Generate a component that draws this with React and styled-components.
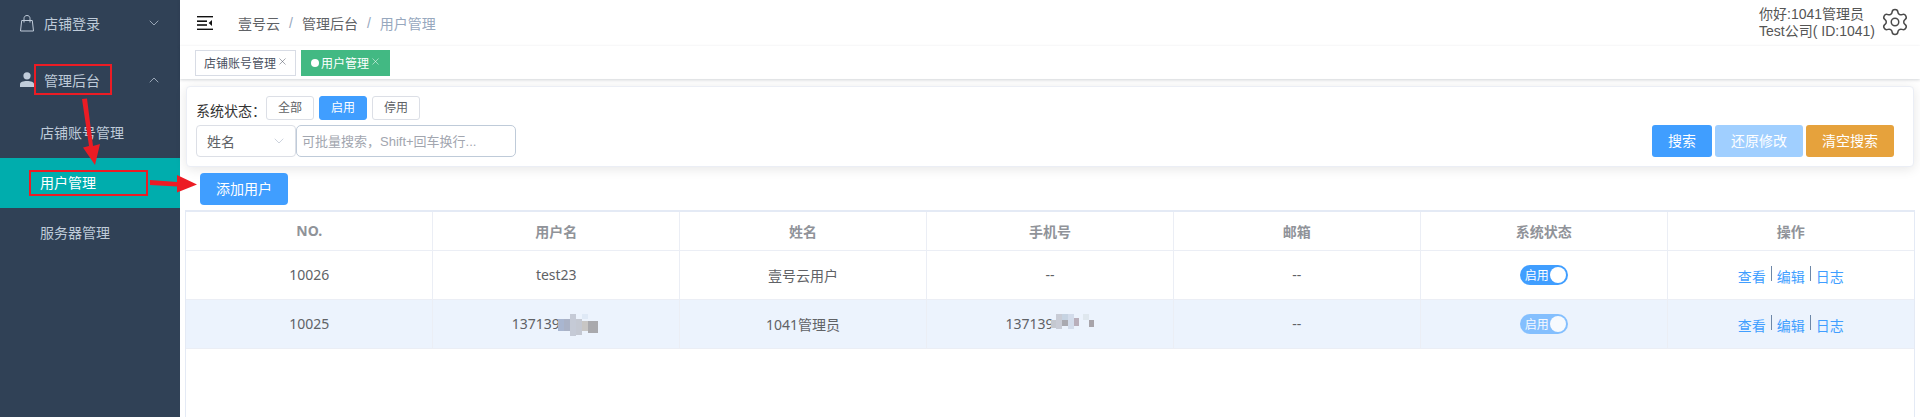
import React from 'react'
import styled, { createGlobalStyle } from 'styled-components'
import { ChevronDown, ChevronUp, Settings, X } from 'lucide-react'

const columns = ['NO.', '用户名', '姓名', '手机号', '邮箱', '系统状态', '操作']

const users = [
  { id: '10026', account: 'test23', name: '壹号云用户', phone: '--', mail: '--' },
  { id: '10025', account: '137139', name: '1041管理员', phone: '137139', mail: '--', masked: true, dimmed: true },
]

export default function App() {
  return (
    <Shell>
      <GlobalStyle />
      <Sidebar>
        <MenuTitle>
          <BagIcon />
          <MenuLabel>店铺登录</MenuLabel>
          <ChevronDown size={16} strokeWidth={1.1} />
        </MenuTitle>
        <MenuTitle $second>
          <UserIcon />
          <MenuLabel>管理后台</MenuLabel>
          <ChevronUp size={16} strokeWidth={1.1} />
        </MenuTitle>
        <SubItem>店铺账号管理</SubItem>
        <SubItem $active>用户管理</SubItem>
        <SubItem>服务器管理</SubItem>
      </Sidebar>

      <Main>
        <Header>
          <FoldIcon />
          <Crumbs>
            <Crumb>壹号云</Crumb><Slash>/</Slash>
            <Crumb>管理后台</Crumb><Slash>/</Slash>
            <Crumb $current>用户管理</Crumb>
          </Crumbs>
          <Greeting>
            <div>你好:1041管理员</div>
            <div>Test公司( ID:1041)</div>
          </Greeting>
          <GearWrap><Settings size={30} strokeWidth={1.2} color="#4a4a4a" /></GearWrap>
        </Header>

        <TagBar>
          <Tag>店铺账号管理<X size={11} strokeWidth={1.1} /></Tag>
          <Tag $active><TagDot />用户管理<X size={11} strokeWidth={1.1} /></Tag>
        </TagBar>

        <FilterCard>
          <StatusRow>
            <StatusLabel>系统状态：</StatusLabel>
            <StatusButton>全部</StatusButton>
            <StatusButton $active>启用</StatusButton>
            <StatusButton>停用</StatusButton>
          </StatusRow>
          <SearchRow>
            <Select>姓名<ChevronDown size={16} strokeWidth={1} color="#b4bccc" /></Select>
            <SearchInput placeholder="可批量搜索，Shift+回车换行..." />
            <Actions>
              <ActionButton $width={60} $bg="#409eff">搜索</ActionButton>
              <ActionButton $width={88} $bg="#a0cfff">还原修改</ActionButton>
              <ActionButton $width={88} $bg="#e6a23c">清空搜索</ActionButton>
            </Actions>
          </SearchRow>
        </FilterCard>

        <AddButton>添加用户</AddButton>

        <TableWrap>
          <Table>
            <thead>
              <tr>{columns.map(c => <HeadCell key={c}>{c}</HeadCell>)}</tr>
            </thead>
            <tbody>
              {users.map(u => (
                <Row key={u.id} $hover={u.dimmed}>
                  <Cell>{u.id}</Cell>
                  <Cell>{u.account}{u.masked && <Mosaic />}</Cell>
                  <Cell>{u.name}</Cell>
                  <Cell>{u.phone}{u.masked && <Mosaic alt />}</Cell>
                  <Cell>{u.mail}</Cell>
                  <Cell>
                    <Switch $dimmed={u.dimmed}>启用<Knob /></Switch>
                  </Cell>
                  <Cell>
                    <OpLinks>
                      <OpLink>查看</OpLink><OpSep />
                      <OpLink>编辑</OpLink><OpSep />
                      <OpLink>日志</OpLink>
                    </OpLinks>
                  </Cell>
                </Row>
              ))}
            </tbody>
          </Table>
        </TableWrap>
      </Main>

      <RedBox $x={34} $y={64} $w={78} $h={31} />
      <RedBox $x={29} $y={170} $w={119} $h={26} />
      <Arrows />
    </Shell>
  )
}

function BagIcon() {
  return (
    <svg width="16" height="17" viewBox="0 0 16 17" fill="none" stroke="#bfcbd9" strokeWidth="1">
      <path d="M1.7 5.5h10.6l1.2 10.5H.5z" />
      <path d="M4 7.5V3.5C4 1.7 5.2.5 7 .5s3 1.2 3 3v4" />
    </svg>
  )
}

function UserIcon() {
  return (
    <svg width="16" height="16" viewBox="0 0 16 16" fill="#c0ccda">
      <circle cx="7" cy="3.8" r="3.6" />
      <path d="M0 15v-2.6C0 10 3 9 7 9s7 1 7 3.4V15z" />
    </svg>
  )
}

function FoldIcon() {
  return (
    <svg width="16" height="14" viewBox="0 0 16 14" fill="#111">
      <rect x="0" y="0" width="16" height="1.4" />
      <rect x="0" y="4.4" width="10" height="1.6" />
      <rect x="0" y="8.2" width="10" height="1.6" />
      <rect x="0" y="12.6" width="16" height="1.4" />
      <path d="M15 4v6l-3.4-3z" />
    </svg>
  )
}

function Mosaic({ alt }) {
  const cells = alt
    ? [[0, 6, 5, 8, '#c4c8d0'], [5, 0, 6, 15, '#c9ccd6'], [11, 0, 6, 12, '#c6d3e2'], [11, 6, 6, 6, '#a9a9b0'], [17, 0, 6, 15, '#d3dceb'], [23, 4, 5, 8, '#b9afbb'], [32, 0, 6, 6, '#dfe7ee'], [38, 6, 5, 7, '#a8a4aa']]
    : [[0, 5, 6, 12, '#a9b6d0'], [6, 5, 6, 12, '#aab2c6'], [12, 0, 6, 22, '#c5cad6'], [18, 5, 6, 16, '#c4c8d2'], [24, 0, 6, 5, '#dfe9f6'], [24, 7, 6, 10, '#c8c6c4'], [30, 7, 10, 12, '#a9a9ad']]
  return (
    <MosaicSvg width="44" height="22" viewBox="0 0 44 22">
      {cells.map(([x, y, w, h, fill], i) => (
        <rect key={i} x={x} y={y} width={w} height={h} fill={fill} />
      ))}
    </MosaicSvg>
  )
}

function Arrows() {
  return (
    <ArrowLayer width="240" height="210" viewBox="0 0 240 210">
      <path d="M82 99l5-.5 6 47.500 7-2-5 21-12-17.500 6-1.500z" fill="#ec1c24" />
      <path d="M150 180l27 2v-7l20 9.500-20 8v-6l-27-1.500z" fill="#ec1c24" />
    </ArrowLayer>
  )
}

const GlobalStyle = createGlobalStyle`
  html, body {
    margin: 0;
    background: #fff;
    font-family: "Liberation Sans", "Noto Sans CJK SC", sans-serif;
    font-size: 14px;
    color: #606266;
    overflow: hidden;
  }
  * { box-sizing: border-box; }
`

const Shell = styled.div`
  position: relative;
  display: flex;
  width: 1920px;
  height: 417px;
  overflow: hidden;
`

const Sidebar = styled.aside`
  width: 180px;
  flex: none;
  background: #304156;
  color: #bfcbd9;
`

const MenuTitle = styled.div`
  display: flex;
  align-items: center;
  height: 50px;
  padding: 0 18px 0 20px;
  margin-top: ${p => (p.$second ? '7px' : '-2px')};
  margin-bottom: ${p => (p.$second ? '3px' : '0')};
  svg:first-child { flex: none; }
`

const MenuLabel = styled.span`
  flex: 1;
  margin-left: 8px;
`

const SubItem = styled.div`
  height: 50px;
  line-height: 50px;
  padding-left: 40px;
  color: ${p => (p.$active ? '#fff' : '#bfcbd9')};
  background: ${p => (p.$active ? '#00adad' : 'transparent')};
`

const Main = styled.main`
  flex: 1;
  min-width: 0;
  display: flex;
  flex-direction: column;
`

const Header = styled.header`
  display: flex;
  align-items: center;
  height: 46px;
  padding: 0 10px 0 17px;
  background: #fff;
  box-shadow: 0 1px 4px rgba(0, 21, 41, 0.08);
`

const Crumbs = styled.div`
  display: flex;
  align-items: center;
  flex: 1;
  margin-left: 25px;
`

const Crumb = styled.span`
  color: ${p => (p.$current ? '#97a8be' : '#606266')};
`

const Slash = styled.span`
  margin: 0 9px;
  color: #97a8be;
`

const Greeting = styled.div`
  font-size: 14px;
  line-height: 17px;
  margin-right: 5px;
  color: #555;
`

const GearWrap = styled.div`
  display: flex;
  margin-top: -2px;
`

const TagBar = styled.div`
  display: flex;
  align-items: center;
  gap: 5px;
  height: 33px;
  padding: 0 15px;
  background: #fff;
  box-shadow: 0 1px 3px rgba(0, 21, 41, 0.18);
`

const Tag = styled.div`
  display: flex;
  align-items: center;
  height: 26px;
  padding: 0 ${p => (p.$active ? '8px' : '7px')} 0 ${p => (p.$active ? '9px' : '8px')};
  font-size: 12px;
  color: ${p => (p.$active ? '#fff' : '#495060')};
  background: ${p => (p.$active ? '#42b983' : '#fff')};
  border: 1px solid ${p => (p.$active ? '#42b983' : '#d8dce5')};
  svg { margin: -3px 0 0 1px; }
`

const TagDot = styled.span`
  width: 8px;
  height: 8px;
  margin-right: 2px;
  border-radius: 50%;
  background: #fff;
`

const FilterCard = styled.section`
  display: flex;
  flex-direction: column;
  gap: 5px;
  height: 81px;
  margin: 7px 6px 0;
  padding: 9px 19px 0 9px;
  background: #fff;
  border: 1px solid #ebeef5;
  border-radius: 4px;
  box-shadow: 0 2px 12px rgba(0, 0, 0, 0.1);
`

const StatusRow = styled.div`
  display: flex;
  align-items: center;
  gap: 5px;
`

const StatusLabel = styled.span`
  width: 65px;
  margin-top: 3px;
  color: #333;
  font-size: 14px;
  white-space: nowrap;
`

const StatusButton = styled.div`
  width: 48px;
  height: 24px;
  line-height: 22px;
  text-align: center;
  font-size: 12px;
  border-radius: 3px;
  color: ${p => (p.$active ? '#fff' : '#606266')};
  background: ${p => (p.$active ? '#409eff' : '#fff')};
  border: 1px solid ${p => (p.$active ? '#409eff' : '#dcdfe6')};
`

const SearchRow = styled.div`
  display: flex;
  align-items: center;
`

const Select = styled.div`
  display: flex;
  align-items: center;
  justify-content: space-between;
  width: 100px;
  height: 32px;
  padding: 0 8px 0 10px;
  color: #606266;
  border: 1px solid #dcdfe6;
  border-radius: 4px;
`

const SearchInput = styled.input`
  width: 220px;
  height: 32px;
  padding: 0 5px;
  font: inherit;
  font-size: 13px;
  border: 1px solid #bfcbd9;
  border-radius: 5px;
  outline: none;
  &::placeholder { color: #a2a6af; opacity: 1; }
`

const Actions = styled.div`
  display: flex;
  gap: 3px;
  margin-left: auto;
`

const ActionButton = styled.div`
  width: ${p => p.$width}px;
  height: 32px;
  line-height: 32px;
  text-align: center;
  color: #fff;
  background: ${p => p.$bg};
  border-radius: 3px;
`

const AddButton = styled.div`
  width: 88px;
  height: 32px;
  line-height: 32px;
  margin: 6px 0 0 20px;
  text-align: center;
  color: #fff;
  background: #409eff;
  border-radius: 4px;
`

const TableWrap = styled.div`
  flex: 1;
  margin: 5px 5px 0;
  border: 1px solid #e4eaf5;
  border-top-width: 2px;
  border-bottom: none;
`

const Table = styled.table`
  width: 100%;
  table-layout: fixed;
  border-collapse: collapse;
`

const HeadCell = styled.th`
  height: 38px;
  font-family: "Noto Sans", "Noto Sans CJK SC", sans-serif;
  font-size: 14px;
  font-weight: 700;
  color: #909399;
  border-right: 1px solid #ebeef5;
  border-bottom: 1px solid #ebeef5;
  &:last-child { border-right: none; }
`

const Row = styled.tr`
  background: ${p => (p.$hover ? '#ecf3fd' : '#fff')};
`

const Cell = styled.td`
  height: 49px;
  padding: 0;
  text-align: center;
  font-family: "Noto Sans", "Noto Sans CJK SC", sans-serif;
  font-size: 14px;
  color: #606266;
  white-space: nowrap;
  border-right: 1px solid #ebeef5;
  border-bottom: 1px solid #ebeef5;
  &:last-child { border-right: none; }
`

const MosaicSvg = styled.svg`
  display: inline-block;
  vertical-align: middle;
  margin: -6px -1px -6px -2px;
`

const Switch = styled.span`
  display: inline-flex;
  align-items: center;
  justify-content: space-between;
  width: 48px;
  height: 20px;
  padding: 0 2px 0 5px;
  font-size: 12px;
  color: #fff;
  background: #409eff;
  border-radius: 10px;
  vertical-align: middle;
  opacity: ${p => (p.$dimmed ? 0.6 : 1)};
`

const Knob = styled.span`
  width: 16px;
  height: 16px;
  border-radius: 50%;
  background: #fff;
`

const OpLinks = styled.div`
  display: flex;
  justify-content: center;
  align-items: flex-start;
  gap: 5px;
`

const OpLink = styled.span`
  margin-top: 3px;
  font-size: 14px;
  line-height: 15px;
  color: #409eff;
`

const OpSep = styled.span`
  width: 1px;
  height: 15px;
  background: #6d87a8;
`

const RedBox = styled.div`
  position: absolute;
  left: ${p => p.$x}px;
  top: ${p => p.$y}px;
  width: ${p => p.$w}px;
  height: ${p => p.$h}px;
  border: 2px solid #ec1c24;
`

const ArrowLayer = styled.svg`
  position: absolute;
  left: 0;
  top: 0;
  pointer-events: none;
`
